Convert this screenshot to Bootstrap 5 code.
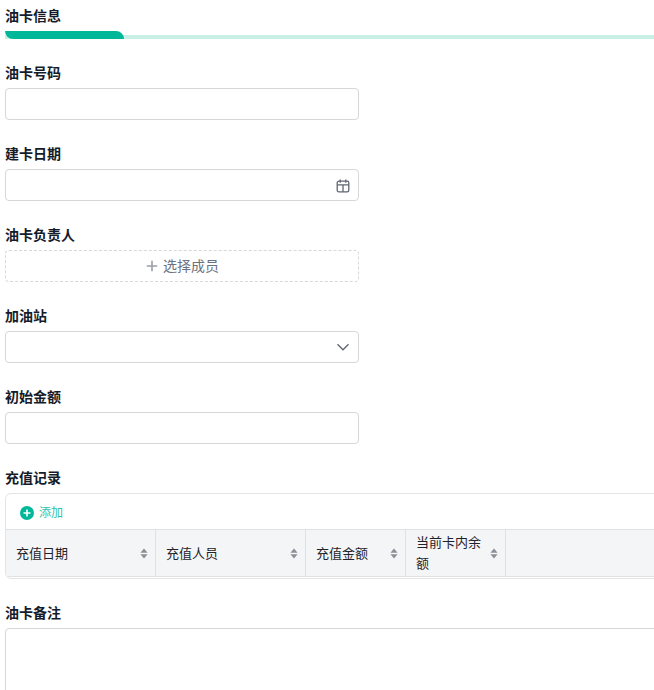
<!DOCTYPE html>
<html lang="zh-CN">
<head>
<meta charset="utf-8">
<title>油卡信息</title>
<link rel="stylesheet" href="https://cdn.jsdelivr.net/npm/bootstrap@5.3.0/dist/css/bootstrap.min.css">
<style>
html, body { height: 690px; overflow: hidden; background: #fff; }
body { font-family: Inter, "Noto Sans CJK SC", sans-serif; font-size: 14px; color: #1f2329; }
.page-wrap { width: 654px; height: 690px; padding-left: 5px; overflow: hidden; }
.sec-title { font-size: 14px; font-weight: 700; line-height: 20px; margin: 6px 0 5px; color: #141c2b; }
.tab-track { height: 8px; width: 660px; display: flex; align-items: flex-end; background: linear-gradient(#fff 4px, #c9f0e5 4px); }
.tab-fill { width: 119px; height: 8px; background: #00b899; border-radius: 0 8px 0 8px; }
.fld-label { font-size: 14px; font-weight: 700; line-height: 20px; margin: 0 0 5px; color: #141c2b; }
.fld-block { width: 354px; margin-bottom: 24px; }
.first-fld { margin-top: 24px; }
.fld-box { height: 32px; border: 1px solid #d5d7da; border-radius: 4px; background: #fff; padding: 0 8px; }
.fld-ico { width: 14px; height: 14px; color: #5f6672; }
.cal-ico { margin-top: 1px; }
.pick-box { height: 32px; border: 1px dashed #d5d7da; border-radius: 4px; color: #6b7280; font-size: 14px; gap: 5px; padding-bottom: 1px; padding-left: 1px; }
.plus-ico { width: 12px; height: 12px; color: #9a9ea8; }
.rec-box { width: 660px; height: 86px; border: 1px solid #e3e4e6; border-radius: 6px 0 0 6px; margin-bottom: 24px; overflow: hidden; }
.rec-bar { height: 35px; padding-left: 14px; padding-top: 2px; gap: 5px; color: #2ec4a8; font-size: 12px; }
.add-ico { width: 14px; height: 14px; }
.rec-head { height: 48px; background: #f4f5f7; border-top: 1px solid #e0e1e3; border-bottom: 1px solid #e0e1e3; font-size: 13px; line-height: 21px; color: #1f2329; }
.rec-cell { border-right: 1px solid #e0e1e3; padding: 0 7px 0 10px; }
.w-wide { width: 150px; }
.w-slim { width: 100px; }
.sort-ico { width: 8px; height: 11px; flex: none; color: #8b8f98; }
.memo-box { width: 660px; height: 120px; border: 1px solid #d5d7da; border-radius: 4px 0 0 0; }
</style>
</head>
<body>
<div class="page-wrap">
  <div class="sec-title">油卡信息</div>
  <div class="tab-track"><div class="tab-fill"></div></div>

  <div class="fld-block first-fld">
    <div class="fld-label">油卡号码</div>
    <div class="fld-box"></div>
  </div>

  <div class="fld-block">
    <div class="fld-label">建卡日期</div>
    <div class="fld-box d-flex align-items-center justify-content-end">
      <svg class="fld-ico cal-ico" viewBox="0 0 14 14" fill="none" stroke="currentColor" stroke-width="1.3"><rect x="1.2" y="2.2" width="11.6" height="10.6" rx="1.6"/><path d="M1.2 5.8h11.6M7 5.8v7M4.2 .6v3.2M9.8 .6v3.2"/></svg>
    </div>
  </div>

  <div class="fld-block">
    <div class="fld-label">油卡负责人</div>
    <div class="pick-box d-flex align-items-center justify-content-center">
      <svg class="plus-ico" viewBox="0 0 12 12" fill="none" stroke="currentColor" stroke-width="1.6"><path d="M6 .8v10.4M.8 6h10.4"/></svg>
      <span>选择成员</span>
    </div>
  </div>

  <div class="fld-block">
    <div class="fld-label">加油站</div>
    <div class="fld-box d-flex align-items-center justify-content-end">
      <svg class="fld-ico" viewBox="0 0 14 14" fill="none" stroke="currentColor" stroke-width="1.3"><path d="M1.5 4.2 7 9.8l5.5-5.6"/></svg>
    </div>
  </div>

  <div class="fld-block">
    <div class="fld-label">初始金额</div>
    <div class="fld-box"></div>
  </div>

  <div class="fld-label">充值记录</div>
  <div class="rec-box">
    <div class="rec-bar d-flex align-items-center">
      <svg class="add-ico" viewBox="0 0 14 14"><circle cx="7" cy="7" r="7" fill="#00b899"/><path d="M7 3.5v7M3.5 7h7" stroke="#fff" stroke-width="1.6"/></svg>
      <span>添加</span>
    </div>
    <div class="rec-head d-flex">
      <div class="rec-cell w-wide d-flex align-items-center justify-content-between"><span>充值日期</span><svg class="sort-ico" viewBox="0 0 8 11" fill="currentColor"><path d="M4 .5 7.6 4.8H.4zM4 10.5.4 6.2h7.2z"/></svg></div>
      <div class="rec-cell w-wide d-flex align-items-center justify-content-between"><span>充值人员</span><svg class="sort-ico" viewBox="0 0 8 11" fill="currentColor"><path d="M4 .5 7.6 4.8H.4zM4 10.5.4 6.2h7.2z"/></svg></div>
      <div class="rec-cell w-slim d-flex align-items-center justify-content-between"><span>充值金额</span><svg class="sort-ico" viewBox="0 0 8 11" fill="currentColor"><path d="M4 .5 7.6 4.8H.4zM4 10.5.4 6.2h7.2z"/></svg></div>
      <div class="rec-cell w-slim d-flex align-items-center justify-content-between"><span>当前卡内余额</span><svg class="sort-ico" viewBox="0 0 8 11" fill="currentColor"><path d="M4 .5 7.6 4.8H.4zM4 10.5.4 6.2h7.2z"/></svg></div>
    </div>
  </div>

  <div class="fld-label">油卡备注</div>
  <div class="memo-box"></div>
</div>
<script src="https://cdn.jsdelivr.net/npm/bootstrap@5.3.0/dist/js/bootstrap.bundle.min.js"></script>
</body>
</html>
